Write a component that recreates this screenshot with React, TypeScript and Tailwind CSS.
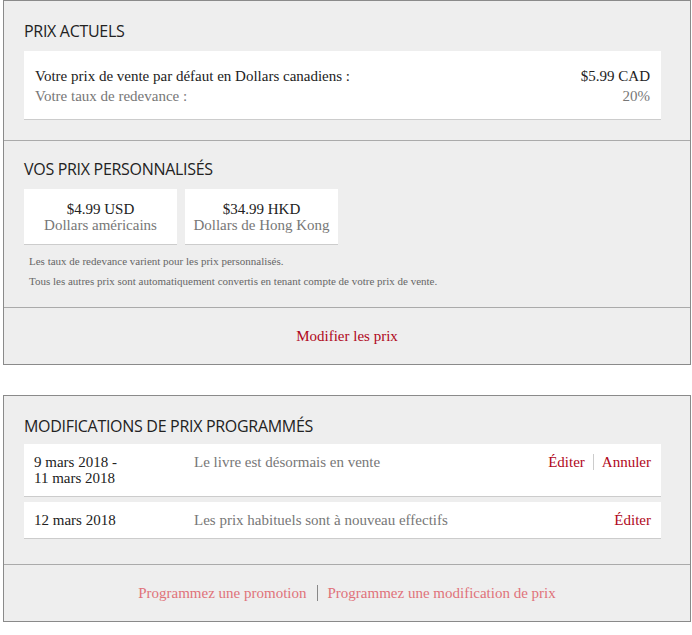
const serif = { fontFamily: '"Liberation Serif", Georgia, serif' }

function Heading({ children }: { children: string }) {
  return (
    <h2 className="text-[16px] leading-5 text-[#222] uppercase" style={{ fontFamily: '"Open Sans", sans-serif', letterSpacing: "-0.3px" }}>
      {children}
    </h2>
  )
}

export default function App() {
  return (
    <div className="w-[692px] bg-white pl-[3px] pr-[1px] text-[15px]" style={serif}>
      <div className="border border-[#8a8a8a] bg-[#eeeeee]">
        <div className="pl-5 pr-[29px] pt-[20px] pb-5">
          <Heading>Prix actuels</Heading>
          <div className="mt-[10px] flex justify-between border-b border-[#cccccc] bg-white px-[11px] pt-[15px] pb-[13px] leading-5">
            <div>
              <div className="text-[#222]">Votre prix de vente par défaut en Dollars canadiens :</div>
              <div className="text-[#777]">Votre taux de redevance :</div>
            </div>
            <div className="text-right">
              <div className="text-[#222]">$5.99 CAD</div>
              <div className="text-[#777]">20%</div>
            </div>
          </div>
        </div>
        <div className="border-t border-[#aaaaaa] pl-5 pr-[29px] pt-[18px] pb-[16px]">
          <Heading>Vos prix personnalisés</Heading>
          <div className="mt-[10px] flex gap-2">
            {[
              ["$4.99 USD", "Dollars américains"],
              ["$34.99 HKD", "Dollars de Hong Kong"],
            ].map(([p, n]) => (
              <div key={p} className="w-[153px] border-b border-[#cccccc] bg-white pt-[12px] pb-[11px] text-center leading-4">
                <div className="text-[#222]">{p}</div>
                <div className="text-[#777]">{n}</div>
              </div>
            ))}
          </div>
          <div className="mt-[6px] px-[5px] text-[11px] leading-5 text-[#666]">
            <p>Les taux de redevance varient pour les prix personnalisés.</p>
            <p>Tous les autres prix sont automatiquement convertis en tenant compte de votre prix de vente.</p>
          </div>
        </div>
        <div className="border-t border-[#aaaaaa] py-[18px] text-center leading-5 text-[#b0071a]">Modifier les prix</div>
      </div>

      <div className="mt-[30px] border border-[#8a8a8a] bg-[#eeeeee]">
        <div className="pl-5 pr-[29px] pt-[20px] pb-[25px]">
          <Heading>Modifications de prix programmés</Heading>
          <div className="mt-[8px] flex border-b border-[#cccccc] bg-white px-[10px] pt-[10px] pb-[10px] leading-4">
            <div className="w-[160px] text-[#222]">9 mars 2018 -<br />11 mars 2018</div>
            <div className="flex-1 text-[#777]">Le livre est désormais en vente</div>
            <div className="flex self-start text-[#b0071a]">
              <span className="border-r border-[#ccc] pr-2">Éditer</span>
              <span className="pl-2">Annuler</span>
            </div>
          </div>
          <div className="mt-[5px] flex border-b border-[#cccccc] bg-white px-[10px] py-[10px] leading-4">
            <div className="w-[160px] text-[#222]">12 mars 2018</div>
            <div className="flex-1 text-[#777]">Les prix habituels sont à nouveau effectifs</div>
            <div className="text-[#b0071a]">Éditer</div>
          </div>
        </div>
        <div className="flex justify-center border-t border-[#aaaaaa] py-[20px] leading-4 text-[#e0727a]">
          <span className="border-r border-[#888] pr-[10px]">Programmez une promotion</span>
          <span className="pl-[10px]">Programmez une modification de prix</span>
        </div>
      </div>
    </div>
  )
}
